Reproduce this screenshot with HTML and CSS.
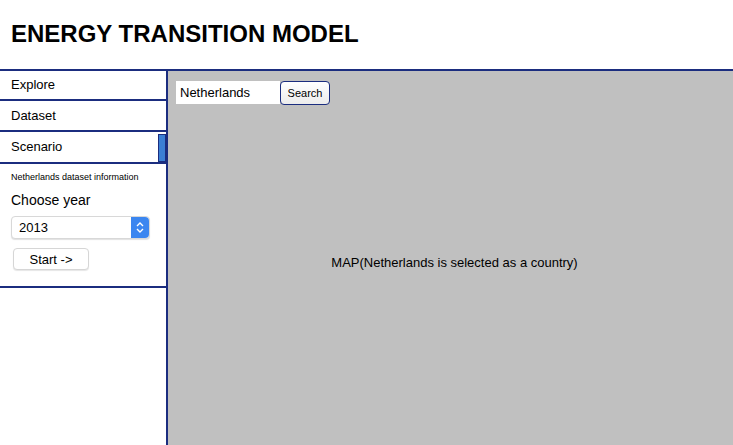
FILE: index.html
```html
<!DOCTYPE html>
<html>
<head>
<meta charset="utf-8">
<link rel="stylesheet" href="styles.css">
</head>
<body>
<header class="header"><h1 class="title">ENERGY TRANSITION MODEL</h1></header>
<div class="layout">
  <aside class="sidebar">
    <div class="nav-item explore">Explore</div>
    <div class="nav-item dataset">Dataset</div>
    <div class="nav-item scenario"><span>Scenario</span><span class="indicator"></span></div>
    <div class="info">
      <div class="info-title">Netherlands dataset information</div>
      <div class="choose">Choose year</div>
      <div class="select"><span class="select-value">2013</span><span class="select-arrow"><svg width="8" height="13" viewBox="0 0 8 13"><path d="M1 5 L4 2 L7 5" fill="none" stroke="#fff" stroke-width="1.4"/><path d="M1 8 L4 11 L7 8" fill="none" stroke="#fff" stroke-width="1.4"/></svg></span></div>
      <div class="start">Start -&gt;</div>
    </div>
  </aside>
  <main class="main">
    <div class="searchbar">
      <div class="search-input">Netherlands</div>
      <div class="search-btn">Search</div>
    </div>
    <div class="map">MAP(Netherlands is selected as a country)</div>
  </main>
</div>
</body>
</html>
```
FILE: styles.css
```css
html, body { margin: 0; padding: 0; height: 100%; }
body { font-family: "Liberation Sans", Arial, sans-serif; color: #000; background: #fff; overflow: hidden; }
.header { height: 69px; border-bottom: 2px solid #1b2d7f; box-sizing: content-box; }
.title { margin: 0; padding: 20px 0 0 11px; font-size: 24px; font-weight: bold; line-height: 28px; letter-spacing: 0; }
.layout { display: flex; height: calc(100% - 71px); }
.sidebar { width: 166px; border-right: 2px solid #1b2d7f; display: flex; flex-direction: column; }
.nav-item { border-bottom: 2px solid #1b2d7f; padding-left: 11px; font-size: 13px; display: flex; align-items: center; justify-content: space-between; }
.explore { height: 28px; padding-bottom: 1px; box-sizing: content-box; height: 27px; }
.dataset { height: 29px; }
.scenario { height: 30px; }
.scenario > span:first-child { margin-top: -1px; }
.indicator { width: 6px; height: 26px; background: #3b7fd4; border: 1px solid #1b2d7f; margin-top: 1px; }
.info { border-bottom: 2px solid #1b2d7f; height: 122px; padding: 0 0 0 11px; }
.info-title { font-size: 9px; margin-top: 8px; line-height: 11px; }
.choose { font-size: 14px; margin-top: 9px; line-height: 17px; }
.select { margin-top: 7px; width: 139px; border: 1px solid #d8d8d8; border-radius: 4px; display: flex; align-items: stretch; box-sizing: border-box; height: 23px; background: #fff; box-shadow: 0 1px 1px rgba(0,0,0,0.12); }
.select-value { flex: 1; font-size: 13px; padding-left: 7px; display: flex; align-items: center; }
.select-arrow { width: 18px; background: #3b86f0; border-radius: 0 4px 4px 0; display: flex; align-items: center; justify-content: center; }
.start { margin: 9px 0 0 2px; width: 76px; height: 22px; box-sizing: border-box; border: 1px solid #d6d6d6; border-radius: 4px; background: #fff; box-shadow: 0 1px 1px rgba(0,0,0,0.1); font-size: 13px; display: flex; align-items: center; justify-content: center; }
.main { flex: 1; background: #c0c0c0; display: flex; flex-direction: column; }
.searchbar { display: flex; padding: 10px 0 0 8px; }
.search-input { width: 104px; height: 23px; background: #fff; font-size: 13px; padding-left: 4px; box-sizing: border-box; display: flex; align-items: center; }
.search-btn { width: 50px; height: 24px; box-sizing: border-box; border: 1px solid #1b2d7f; border-radius: 4px; background: linear-gradient(#fff, #ececec); font-size: 11px; display: flex; align-items: center; justify-content: center; }
.map { flex: 1; display: flex; align-items: center; justify-content: center; font-size: 13px; padding: 0 0 26px 8px; }
```
